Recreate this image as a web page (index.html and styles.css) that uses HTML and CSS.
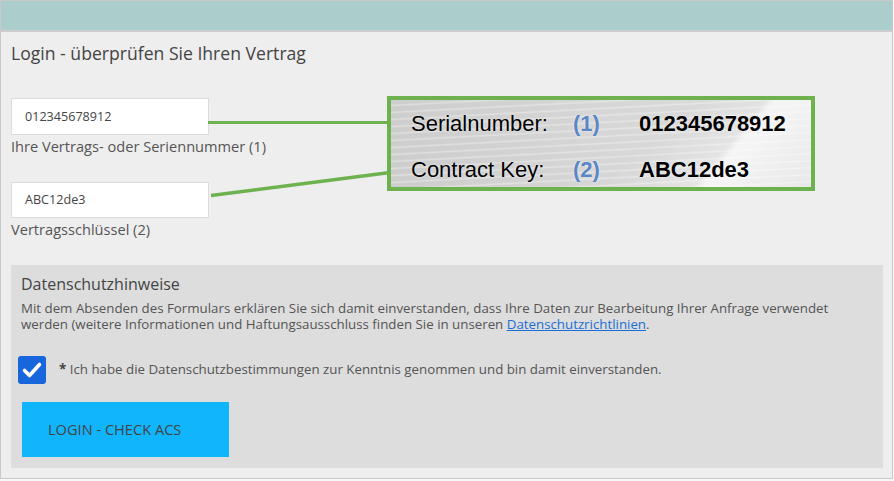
FILE: index.html
```
<!DOCTYPE html>
<html lang="de">
<head>
<meta charset="utf-8">
<title>Login</title>
<link rel="stylesheet" href="styles.css">
</head>
<body>
<div class="frame">
  <div class="topbar"></div>
  <div class="content">
    <h1 class="title">Login - überprüfen Sie Ihren Vertrag</h1>
    <div class="field">
      <div class="input">012345678912</div>
      <div class="label">Ihre Vertrags- oder Seriennummer (1)</div>
    </div>
    <div class="field field-2">
      <div class="input">ABC12de3</div>
      <div class="label">Vertragsschlüssel (2)</div>
    </div>
    <div class="privacy">
      <h2 class="privacy-title">Datenschutzhinweise</h2>
      <p class="privacy-text">Mit dem Absenden des Formulars erklären Sie sich damit einverstanden, dass Ihre Daten zur Bearbeitung Ihrer Anfrage verwendet werden (weitere Informationen und Haftungsausschluss finden Sie in unseren <a href="#" class="link">Datenschutzrichtlinien</a>.</p>
      <div class="check-row">
        <span class="checkbox"><svg viewBox="0 0 28 28" width="28" height="28"><path d="M6.5 14.5 L11.5 19.5 L21.5 8.5" fill="none" stroke="#fff" stroke-width="3.6" stroke-linecap="round" stroke-linejoin="round"/></svg></span>
        <span class="check-text"><b>*</b> Ich habe die Datenschutzbestimmungen zur Kenntnis genommen und bin damit einverstanden.</span>
      </div>
      <div class="btn">LOGIN - CHECK ACS</div>
    </div>
  </div>

  <svg class="connectors" width="894" height="481" viewBox="0 0 894 481">
    <line x1="208" y1="122.5" x2="390" y2="122.5" stroke="#6db24f" stroke-width="3.2"/>
    <line x1="211" y1="195.5" x2="390" y2="172.5" stroke="#6db24f" stroke-width="3.6"/>
  </svg>
  <div class="callout">
    <div class="callout-row"><span class="c-name">Serialnumber:</span><span class="c-num">(1)</span><span class="c-val">012345678912</span></div>
    <div class="callout-row"><span class="c-name">Contract Key:</span><span class="c-num">(2)</span><span class="c-val">ABC12de3</span></div>
  </div>
</div>
</body>
</html>
```
FILE: styles.css
```
* { box-sizing: border-box; }
html, body { margin: 0; padding: 0; }
body {
  background: #f7f7f7;
  font-family: "Open Sans", "Liberation Sans", sans-serif;
  color: #555;
}
.frame {
  position: relative;
  width: 893px;
  height: 479px;
  border: 1px solid #c9c9c9;
  background: #eeeeee;
}
.topbar {
  height: 31px;
  background: #abcdcc;
  border-bottom: 2px solid #cdcdcd;
}
.content {
  padding: 0 8px 0 10px;
}
.title {
  margin: 9px 0 0;
  font-size: 17.6px;
  line-height: 24px;
  font-weight: 400;
  color: #444;
}
.field { margin-top: 33px; }
.field-2 { margin-top: 26px; }
.input {
  width: 198px;
  height: 37px;
  background: #fff;
  border: 1px solid #dcdcdc;
  padding-left: 13px;
  font-size: 12.6px;
  line-height: 35px;
  color: #444;
}
.field-2 .input { height: 36px; line-height: 34px; }
.label {
  margin-top: 1px;
  font-size: 14.6px;
  line-height: 20px;
  color: #555;
}
.privacy {
  margin-top: 26px;
  width: 872px;
  background: #dddddd;
  padding: 8px 10px 11px 10px;
}
.privacy-title {
  margin: 0;
  font-size: 16px;
  line-height: 22px;
  font-weight: 400;
  color: #444;
}
.privacy-text {
  margin: 5px 0 0;
  font-size: 13.3px;
  line-height: 16px;
  color: #555;
}
.link { color: #1a6fd6; text-decoration: underline; }
.check-row {
  margin: 24px 0 0 -3px;
  display: flex;
  align-items: center;
  gap: 13px;
}
.checkbox {
  width: 28px;
  height: 28px;
  border-radius: 3px;
  background: #1766dc;
  display: flex;
}
.check-text {
  font-size: 13.3px;
  line-height: 18px;
  margin-top: -2px;
  color: #555;
}
.check-text b { color: #444; }
.btn {
  margin: 18px 0 0 1px;
  width: 207px;
  height: 55px;
  background: #10b5fb;
  color: #444;
  font-size: 14.6px;
  line-height: 55px;
  padding-left: 26px;
}
.connectors {
  position: absolute;
  left: -1px;
  top: -1px;
  pointer-events: none;
}
.callout {
  position: absolute;
  left: 386px;
  top: 95px;
  width: 428px;
  height: 95px;
  border: 4px solid #6db24f;
  padding: 1px 0 0 20px;
  background:
    linear-gradient(130deg, rgba(255,255,255,0) 0%, rgba(255,255,255,0) 76%, rgba(255,255,255,0.6) 78%, rgba(255,255,255,0.3) 90%, rgba(255,255,255,0.15) 100%),
    linear-gradient(140deg, rgba(255,255,255,0) 60%, rgba(255,255,255,0.35) 80%, rgba(255,255,255,0.2) 100%),
    repeating-linear-gradient(177deg, rgba(255,255,255,0) 0px, rgba(255,255,255,0) 4px, rgba(255,255,255,0.35) 5.5px, rgba(255,255,255,0) 7px),
    linear-gradient(90deg, #cdcdcd 0%, #d6d6d6 50%, #dedede 100%);
  font-family: "Liberation Sans", Arial, sans-serif;
  color: #000;
}
.callout-row {
  display: flex;
  align-items: center;
  height: 46px;
  font-size: 22px;
  text-shadow: 0 0 2px rgba(255,255,255,0.8);
}
.c-name { width: 162px; }
.c-num { width: 66px; font-weight: 700; color: #5b86c4; }
.c-val { font-weight: 700; }
```
